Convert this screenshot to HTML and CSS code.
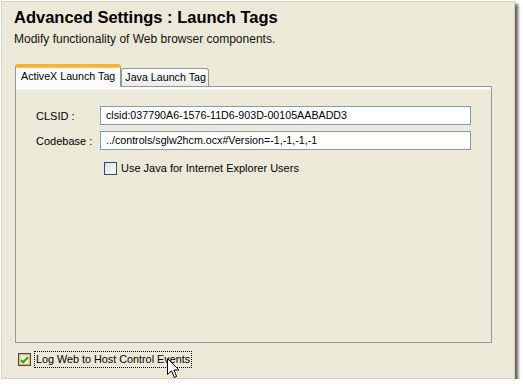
FILE: index.html
```html
<!DOCTYPE html>
<html lang="en">
<head>
    <meta charset="UTF-8">
    <title>Advanced Settings : Launch Tags</title>
    <link rel="stylesheet" href="styles.css">
</head>
<body>
    <div class="window">
        <div class="header">
            <h1>Advanced Settings : Launch Tags</h1>
            <p>Modify functionality of Web browser components.</p>
        </div>

        <div class="tabs">
            <div class="tab tab-active">ActiveX Launch Tag</div>
            <div class="tab">Java Launch Tag</div>
        </div>

        <div class="tab-panel">
            <div class="form-row">
                <label class="form-label">CLSID :</label>
                <div class="text-input">clsid:037790A6-1576-11D6-903D-00105AABADD3</div>
            </div>
            <div class="form-row">
                <label class="form-label">Codebase :</label>
                <div class="text-input">../controls/sglw2hcm.ocx#Version=-1,-1,-1,-1</div>
            </div>
            <div class="check-row">
                <span class="checkbox"></span>
                <span class="check-label">Use Java for Internet Explorer Users</span>
            </div>
        </div>

        <div class="footer">
            <span class="checkbox checkbox-hover">
                <svg width="9" height="8" viewBox="0 0 9 8">
                    <path d="M1 4 L3.2 6.3 L8 1.3" fill="none" stroke="#21a121" stroke-width="2"/>
                </svg>
            </span>
            <span class="check-label focus-label">Log Web to Host Control Events</span>
            <svg class="cursor" width="13" height="21" viewBox="0 0 13 21">
                <path d="M0.5 0.5 L0.5 16.5 L4.5 12.8 L7.3 19.5 L9.6 18.5 L6.9 12 L12 12 Z" fill="#fff" stroke="#000" stroke-width="1" stroke-linejoin="miter"/>
            </svg>
        </div>
    </div>
</body>
</html>
```

FILE: styles.css
```css
* {
    margin: 0;
    padding: 0;
    box-sizing: border-box;
}

body {
    background: #ffffff;
    font-family: 'Liberation Sans', Arial, sans-serif;
}

.window {
    position: relative;
    width: 514px;
    height: 378px;
    margin: 1px 0 0 1px;
    background: #ece9d8;
    border: 1px solid #d6d3c6;
    box-shadow: 3px 3px 3px rgba(0, 0, 0, 0.65);
    padding: 0 0 0 12px;
}

.header {
    padding-top: 5px;
}

.header h1 {
    font-size: 16.5px;
    line-height: 20px;
    font-weight: bold;
    color: #000;
}

.header p {
    margin-top: 4px;
    font-size: 12px;
    line-height: 16px;
    color: #111;
}

.tabs {
    display: flex;
    align-items: flex-end;
    margin-top: 17px;
    margin-left: 1px;
    height: 22px;
    position: relative;
    z-index: 1;
}

.tab {
    height: 18px;
    padding: 0 2px 0 3px;
    font-size: 10.7px;
    line-height: 17px;
    color: #000;
    border: 1px solid #919b9c;
    border-bottom: none;
    border-radius: 3px 3px 0 0;
    background: linear-gradient(#ffffff, #ecebe6);
}

.tab-active {
    height: 23px;
    margin-bottom: -1px;
    padding: 0 5px 0 5px;
    line-height: 19px;
    background: #fcfcfe;
    border-top: 3px solid #f4b23e;
    box-shadow: inset 0 1px 0 #ffc83c;
}

.tab-panel {
    width: 477px;
    height: 257px;
    margin-left: 1px;
    border: 1px solid #919b9c;
    background: linear-gradient(#fcfcfe 0, #fcfcfe 2px, #ece9d8 3px);
    padding: 19px 0 0 20px;
}

.form-row {
    display: flex;
    align-items: center;
    margin-bottom: 6px;
}

.form-label {
    width: 64px;
    font-size: 11px;
    color: #000;
}

.text-input {
    width: 371px;
    height: 19px;
    border: 1px solid #7f9db9;
    background: #fff;
    font-size: 10.7px;
    line-height: 17px;
    padding-left: 5px;
    color: #000;
    white-space: nowrap;
    overflow: hidden;
}

.check-row {
    display: flex;
    align-items: center;
    gap: 4px;
    margin: 11px 0 0 68px;
}

.checkbox {
    display: flex;
    align-items: center;
    justify-content: center;
    width: 13px;
    height: 13px;
    border: 1px solid #1c5180;
    background: linear-gradient(135deg, #dcdcd7, #ffffff);
}

.check-label {
    font-size: 11px;
    line-height: 14px;
    color: #000;
}

.footer {
    display: flex;
    align-items: center;
    gap: 3px;
    margin-top: 8px;
    margin-left: 4px;
}

.checkbox-hover {
    box-shadow: inset 0 0 0 1px #f9b74a, inset 0 0 0 2px #fdd889;
    background: #f4f3ee;
}

.focus-label {
    border: 1px dotted #000;
    padding: 0 1px 1px 1px;
    font-size: 10.8px;
}

.cursor {
    position: absolute;
    left: 165px;
    top: 356px;
}
```
